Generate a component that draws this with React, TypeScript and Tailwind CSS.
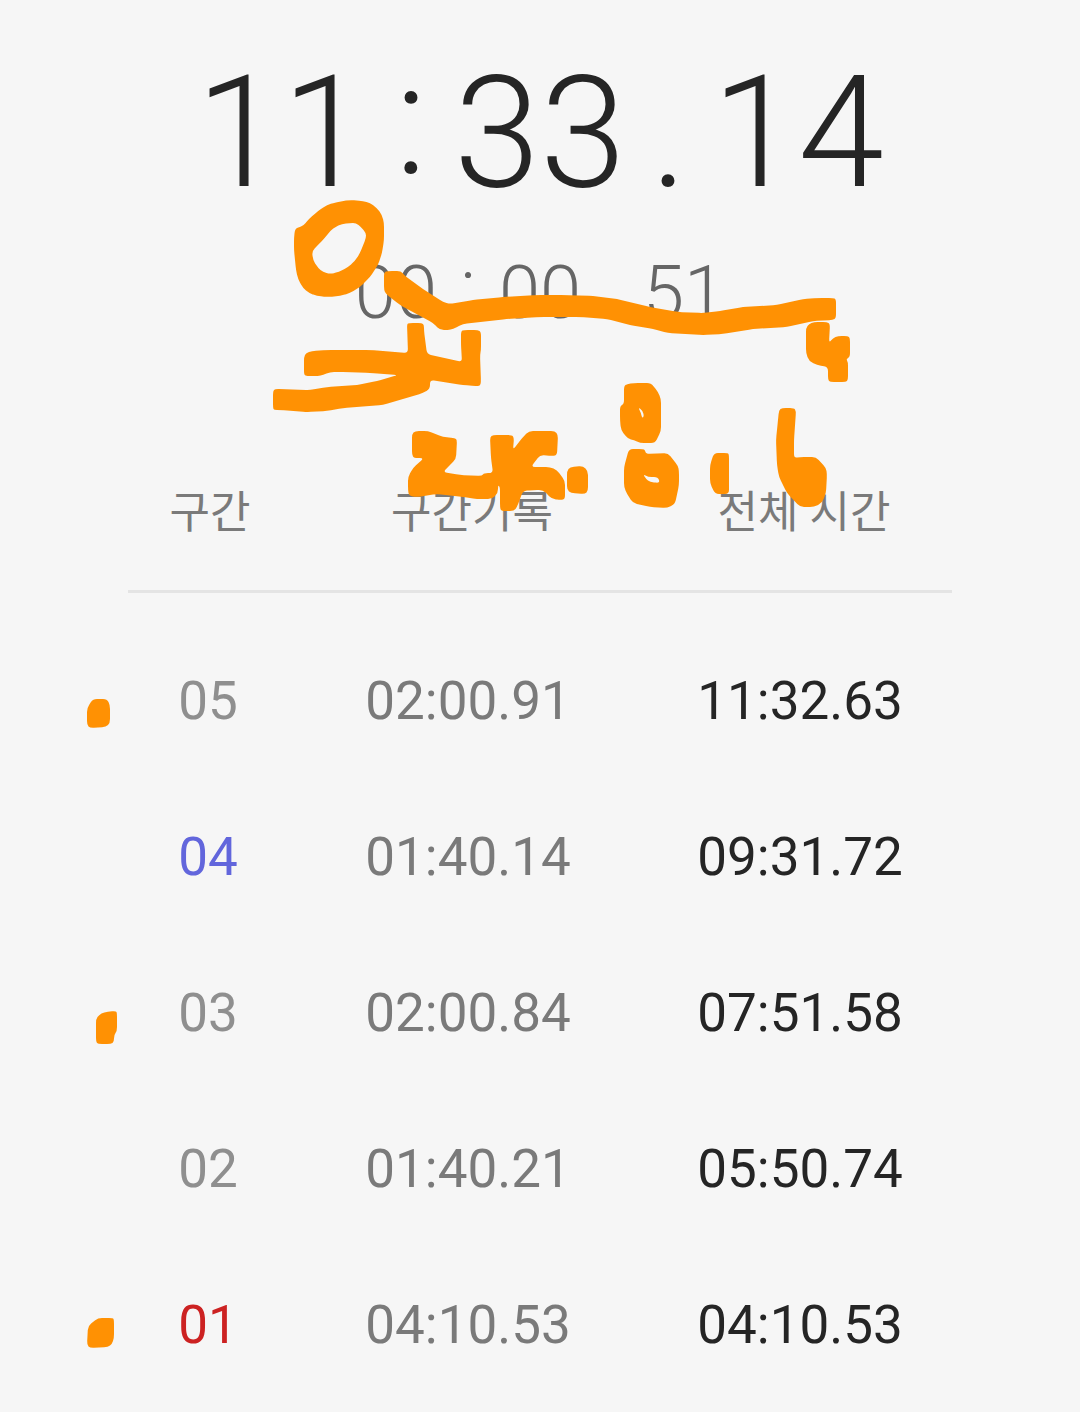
import React from 'react';

interface Lap {
  no: string;
  split: string;
  total: string;
  noClass: string;
}

const laps: Lap[] = [
  { no: '05', split: '02:00.91', total: '11:32.63', noClass: 'text-[#8f8f8f]' },
  { no: '04', split: '01:40.14', total: '09:31.72', noClass: 'text-[#6266dc]' },
  { no: '03', split: '02:00.84', total: '07:51.58', noClass: 'text-[#8f8f8f]' },
  { no: '02', split: '01:40.21', total: '05:50.74', noClass: 'text-[#8f8f8f]' },
  { no: '01', split: '04:10.53', total: '04:10.53', noClass: 'text-[#cc2222]' },
];

// Marker drawings. Each entry is one shape, its outlines are lists of x,y points.
const marks: string[][] = [
  // ring and its opening
  [
    '295,229 299,227 303,226 309,219 318,211 327,205 337,202 350,200 363,201 370,203 377,208 382,215 384,223 384,240 382,253 378,265 370,277 360,287 350,293 340,296 328,297 317,296 309,293 303,288 298,279 296,270 294,250 294,238',
    '312,251 322,241 333,228 342,224 350,223 356,223 361,227 366,233 366,238 360,253 355,261 348,267 339,272 330,274 323,272 318,268 313,260',
  ],
  // long line
  [
    '384,272 388,271 401,271 404,275 420,287 443,302 450,304 473,300 503,297 537,295 565,295 593,296 617,299 650,307 678,312 703,313 720,311 743,307 777,305 803,299 818,298 833,298 836,299 836,318 833,320 813,321 787,327 753,329 723,334 703,335 668,333 653,329 630,325 607,319 580,317 540,317 507,319 463,324 453,329 448,330 440,330 433,323 400,305 386,294 384,290',
  ],
  [
    '407,324 409,323 422,323 424,325 424,331 427,354 462,362 461,345 461,331 464,330 478,330 481,332 481,350 480,355 481,382 480,386 476,386 463,385 430,380 430,389 423,393 383,405 343,408 327,411 307,412 280,410 274,410 273,408 273,391 275,389 310,390 327,387 357,385 377,381 398,375 370,373 347,372 330,372 323,375 318,376 307,376 304,375 304,357 306,353 312,351 327,350 370,350 408,353',
  ],
  [
    '806,328 809,324 814,322 827,322 830,324 829,343 833,338 838,336 848,336 850,338 850,357 846,359 848,362 848,380 846,382 830,382 828,380 828,367 817,365 809,361 806,353',
  ],
  [
    '412,434 415,431 428,431 443,437 455,438 457,440 456,459 443,472 460,475 482,476 484,473 493,473 491,458 490,437 493,435 512,435 514,438 513,450 522,438 529,431 555,431 558,435 557,455 553,456 540,455 531,467 550,467 557,470 565,481 565,499 561,500 552,499 543,490 533,490 523,491 517,507 514,511 501,511 500,507 500,487 498,485 498,493 492,499 477,499 463,497 437,494 417,497 409,496 408,490 408,477 413,468 424,458 414,458 412,455',
  ],
  ['567,471 570,467 583,466 588,471 588,491 585,494 571,493 567,490'],
  [
    '624,386 627,384 634,383 651,383 658,392 661,399 661,431 655,443 640,443 634,440 628,439 621,430 620,420 620,406 624,404',
    '638,407 643,411 644,417 642,418 641,413',
  ],
  [
    '629,449 643,449 645,450 646,454 668,453 678,466 679,471 679,485 675,504 667,508 650,507 633,503 627,494 624,487 624,467',
    '643,474 648,477 658,477 660,483 650,482 646,479',
  ],
  ['714,453 728,453 729,455 729,494 715,494 710,483 710,465'],
  [
    '779,410 782,408 794,408 796,411 794,440 794,458 800,457 816,457 826,468 827,474 826,493 822,503 814,507 800,507 787,493 779,477 777,465 776,440 778,420',
  ],
  // row dots
  ['87,708 93,699 107,699 110,705 110,723 106,727 90,728 87,725'],
  ['96,1019 99,1015 104,1012 116,1011 117,1013 117,1031 114,1035 114,1042 111,1044 98,1044 96,1042'],
  ['88,1326 98,1318 113,1318 114,1320 114,1338 112,1344 108,1347 90,1348 87,1345'],
];

// Joins the points of an outline, with the corners rounded off
const toPath = (outline: string) => {
  const pts = outline.split(' ').map((p) => p.split(',').map(Number));
  const toward = (from: number[], to: number[]) => {
    const dist = Math.hypot(to[0] - from[0], to[1] - from[1]);
    const t = Math.min(0.5, 4 / dist);
    return `${from[0] + (to[0] - from[0]) * t} ${from[1] + (to[1] - from[1]) * t}`;
  };
  const corners = pts.map((p, i) => {
    const prev = pts[(i + pts.length - 1) % pts.length];
    const next = pts[(i + 1) % pts.length];
    return `${toward(p, prev)} Q${p[0]} ${p[1]} ${toward(p, next)}`;
  });
  return `M${corners.join(' L')}Z`;
};

const Marker: React.FC = () => (
  <svg
    className="absolute left-0 top-0 w-full pointer-events-none"
    viewBox="0 0 1080 1412"
    fill="#ff9103"
    fillRule="evenodd"
    aria-hidden="true"
  >
    {marks.map((outlines, i) => (
      <path key={i} d={outlines.map(toPath).join(' ')} />
    ))}
  </svg>
);

const App: React.FC = () => {
  return (
    <main className="relative min-h-screen bg-[#f6f6f6] font-['Roboto','Noto_Sans_CJK_KR',sans-serif]">
      {/* Total time */}
      <div className="flex items-center justify-center pt-10 font-light text-[155px] leading-[160px] text-[#252525]">
        <span>11</span>
        <span className="w-[86px] mb-[26px] text-center">:</span>
        <span>33</span>
        <span className="w-[86px] text-center">.</span>
        <span>14</span>
      </div>

      {/* Current lap */}
      <div className="flex items-center justify-center mt-5 font-light text-[74px] leading-[80px] text-[#666666]">
        <span>00</span>
        <span className="w-[62px] mb-[14px] text-center">:</span>
        <span>00</span>
        <span className="w-[62px] text-center">.</span>
        <span>51</span>
      </div>

      {/* Lap list */}
      <div className="px-32 mt-[146px]">
        <table className="w-full table-fixed border-separate border-spacing-0 text-center">
          <thead className="text-[44px] leading-[54px] text-[#7a7a7a]">
            <tr>
              <th className="w-40 pl-1 pb-[50px] border-b-[3px] border-[#e4e4e4] font-normal">구간</th>
              <th className="w-[360px] pl-2 pb-[50px] border-b-[3px] border-[#e4e4e4] font-normal">구간기록</th>
              <th className="pl-2 pb-[50px] border-b-[3px] border-[#e4e4e4] font-normal">전체 시간</th>
            </tr>
          </thead>
          <tbody className="text-[53px] leading-[60px]">
            {laps.map((lap) => (
              <tr key={lap.no}>
                <td className={`pt-[78px] pb-[18px] ${lap.noClass}`}>{lap.no}</td>
                <td className="pt-[78px] pb-[18px] text-[#7a7a7a]">{lap.split}</td>
                <td className="pt-[78px] pb-[18px] text-[#252525]">{lap.total}</td>
              </tr>
            ))}
          </tbody>
        </table>
      </div>

      <Marker />
    </main>
  );
};

export default App;
